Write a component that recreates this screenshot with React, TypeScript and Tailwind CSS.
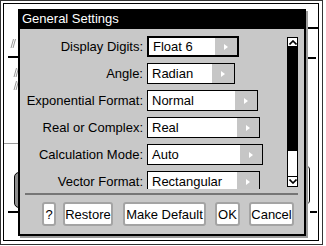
import React from "react";

type Row = {
  label: string;
  value: string;
  width: string;
  focused?: boolean;
};

const rows: Row[] = [
  { label: "Display Digits:", value: "Float 6", width: "w-[92px]", focused: true },
  { label: "Angle:", value: "Radian", width: "w-[88px]" },
  { label: "Exponential Format:", value: "Normal", width: "w-[111px]" },
  { label: "Real or Complex:", value: "Real", width: "w-[113px]" },
  { label: "Calculation Mode:", value: "Auto", width: "w-[116px]" },
  { label: "Vector Format:", value: "Rectangular", width: "w-[113px]" },
];

const buttons = [
  { text: "?", cls: "ml-[22px] w-[14px]" },
  { text: "Restore", cls: "ml-[7px] w-[50px]" },
  { text: "Make Default", cls: "ml-[10px] w-[83px]" },
  { text: "OK", cls: "ml-[9px] w-[25px]" },
  { text: "Cancel", cls: "ml-[9px] w-[45px]" },
];

const Arrow = () => (
  <svg width="4" height="6" viewBox="0 0 4 6">
    <path d="M0 0 L4 3 L0 6 Z" fill="#ffffff" />
  </svg>
);

const Chevron = ({ up }: { up?: boolean }) => (
  <svg width="8" height="5" viewBox="0 0 8 5">
    <path
      d={up ? "M0.5 4.5 L4 1 L7.5 4.5" : "M0.5 0.5 L4 4 L7.5 0.5"}
      stroke="#000"
      strokeWidth="1.6"
      fill="none"
    />
  </svg>
);

const Smudge = () => (
  <svg width="7" height="11" viewBox="0 0 7 11">
    <path d="M3 10 L5.5 1 M1 10 L3.5 1" stroke="#9a9a9a" strokeWidth="1" fill="none" />
  </svg>
);

const Field = ({ row }: { row: Row }) => (
  <div
    className={`${row.width} h-[21px] shrink-0 flex bg-white ${
      row.focused ? "border-2" : "border"
    } border-black`}
  >
    <div className="flex-1 flex items-center pl-[4px] text-[13px] text-black leading-none">
      {row.value}
    </div>
    <div className="w-[22px] bg-[#c6c6c6] flex items-center justify-center">
      <Arrow />
    </div>
  </div>
);

export default function App() {
  return (
    <div className="w-[326px] h-[246px] bg-white font-['Liberation_Sans',Arial,sans-serif]">
      <div className="w-[323px] h-[245px] border border-[#333] pt-[2px] pl-[2px]">
        <div className="relative w-[316px] h-[238px] border border-black bg-white overflow-hidden">
          {/* app content behind the dialog */}
          <div className="absolute left-[6px] top-[34px]">
            <Smudge />
          </div>
          <div className="absolute left-[9px] top-[63px] flex flex-col gap-[2px]">
            <Smudge />
            <Smudge />
          </div>
          <div className="absolute left-[4px] top-[52px] w-[14px] h-[2px] bg-black" />
          <div className="absolute left-0 top-[139px] w-[16px] h-[1px] bg-[#9a9a9a]" />
          <div className="absolute left-[10px] top-[168px] w-[30px] h-[36px] border border-black rounded-[5px] bg-[#8e8e8e]" />
          <div className="absolute left-[4px] top-[207px] w-[14px] h-[2px] bg-black" />
          <div className="absolute left-[304px] top-[23px] w-[10px] h-[2px] bg-black" />
          <div className="absolute left-[304px] top-[53px] w-[8px] h-[2px] bg-black" />
          <div className="absolute left-[280px] top-[162px] w-[26px] h-[38px] border-r border-black rounded-r-[4px]" />
          <div className="absolute left-[306px] top-[207px] w-[7px] h-[2px] bg-black" />

          {/* dialog */}
          <div className="absolute left-[14px] top-[5px] w-[288px] h-[227px] border-2 border-black bg-[#c8c8c8] shadow-[2px_2px_0_#9c9c9c] flex flex-col">
            <div className="h-[18px] bg-black text-white text-[13px] leading-[15px] pl-[2px]">
              General Settings
            </div>

            <div className="h-[160px] overflow-hidden flex">
              <div className="w-[267px] pt-[7px] flex flex-col gap-[6px]">
                {rows.map((row) => (
                  <div key={row.label} className="flex items-center">
                    <div className="w-[123px] text-right text-[13px] text-black leading-none whitespace-nowrap">
                      {row.label}
                    </div>
                    <div className="ml-[4px]">
                      <Field row={row} />
                    </div>
                  </div>
                ))}
              </div>
              <div className="mt-[8px] w-[11px] h-[150px] flex flex-col">
                <div className="h-[10px] border border-black bg-white flex items-center justify-center">
                  <Chevron up />
                </div>
                <div className="flex-1 border-x border-black bg-white">
                  <div className="h-[104px] bg-black" />
                </div>
                <div className="h-[11px] border border-black bg-white flex items-center justify-center">
                  <Chevron />
                </div>
              </div>
            </div>

            <div className="mt-[4px] ml-[5px] mr-[6px] h-[2px] bg-[#767676]" />

            <div className="mt-[7px] h-[24px] flex">
              {buttons.map((b) => (
                <div
                  key={b.text}
                  className={`${b.cls} h-[24px] bg-white border-2 border-[#a4a4a4] rounded-[3px] flex items-center justify-center text-[13px] text-black leading-none whitespace-nowrap`}
                >
                  {b.text}
                </div>
              ))}
            </div>
          </div>
        </div>
      </div>
    </div>
  );
}
